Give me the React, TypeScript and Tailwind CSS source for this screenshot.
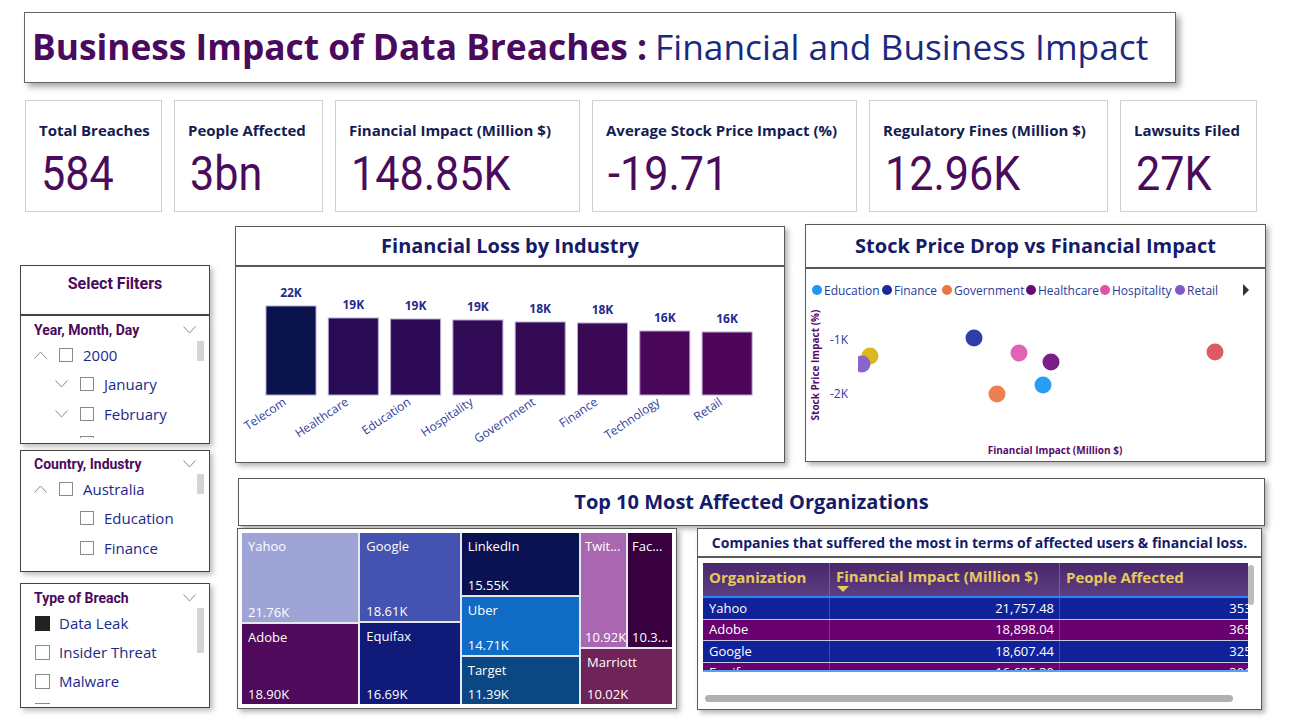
const kpis = [
  { label: 'Total Breaches', value: '584', w: 'w-[137px]' },
  { label: 'People Affected', value: '3bn', w: 'w-[149px]' },
  { label: 'Financial Impact (Million $)', value: '148.85K', w: 'w-[245px]' },
  { label: 'Average Stock Price Impact (%)', value: '-19.71', w: 'w-[265px]' },
  { label: 'Regulatory Fines (Million $)', value: '12.96K', w: 'w-[239px]' },
  { label: 'Lawsuits Filed', value: '27K', w: 'w-[137px]' },
];

const bars = [
  { n: 'Telecom', v: '22K', h: 89, c: '#0b134d' },
  { n: 'Healthcare', v: '19K', h: 77, c: '#290b55' },
  { n: 'Education', v: '19K', h: 76, c: '#2c0a56' },
  { n: 'Hospitality', v: '19K', h: 75, c: '#300a55' },
  { n: 'Government', v: '18K', h: 73, c: '#340a55' },
  { n: 'Finance', v: '18K', h: 72, c: '#3b0855' },
  { n: 'Technology', v: '16K', h: 64, c: '#4a0658' },
  { n: 'Retail', v: '16K', h: 63, c: '#4e0658' },
];

const legend = [
  { n: 'Education', c: '#2196f3', x: 11 },
  { n: 'Finance', c: '#1a2a9c', x: 81 },
  { n: 'Government', c: '#ec7540', x: 141 },
  { n: 'Healthcare', c: '#6a0a78', x: 225 },
  { n: 'Hospitality', c: '#e350a8', x: 299 },
  { n: 'Retail', c: '#8256cc', x: 374 },
];

const dots = [
  { x: 168, y: 69, c: '#2c3fa8' },
  { x: 213, y: 84, c: '#e064b4' },
  { x: 245, y: 93, c: '#7a1e88' },
  { x: 191, y: 125, c: '#ec8050' },
  { x: 237, y: 116, c: '#2a9cf4' },
  { x: 409, y: 83, c: '#e05a64' },
  { x: 64, y: 87, c: '#dcb81c' },
];

const rows = [
  { org: 'Yahoo', fin: '21,757.48', ppl: '353,004,523', bg: 'bg-[#10229a]' },
  { org: 'Adobe', fin: '18,898.04', ppl: '365,112,908', bg: 'bg-[#690070]' },
  { org: 'Google', fin: '18,607.44', ppl: '325,870,411', bg: 'bg-[#10229a]' },
  { org: 'Equifax', fin: '16,685.30', ppl: '301,245,880', bg: 'bg-[#690070]' },
];

const din = "font-['Roboto',sans-serif]";
const visual = 'border border-[#5a5a5a] bg-white shadow-[3px_3px_5px_rgba(0,0,0,0.3)]';

// thin power bi style chevron
function Chev({ up }: { up?: boolean }) {
  return (
    <svg width="13" height="8" viewBox="0 0 13 8" className="block">
      <polyline
        points={up ? '0.5,7.5 6.5,1 12.5,7.5' : '0.5,0.5 6.5,7 12.5,0.5'}
        fill="none"
        stroke="#8a8a8a"
        strokeWidth="1"
      />
    </svg>
  );
}

function Box() {
  return <div className="w-[14px] h-[14px] shrink-0 border bg-white border-[#8a8a8a]" />;
}

function Item({ label, level, chev }: { label: string; level: number; chev: 'up' | 'down' | 'none' }) {
  return (
    <div className={`flex items-center h-[29.5px] ${level === 0 ? 'pl-[13px]' : 'pl-[34px]'}`}>
      <div className="w-[13px] mr-[12px] flex items-center">
        {chev === 'up' && <Chev up />}
        {chev === 'down' && <Chev />}
      </div>
      <Box />
      <span className="ml-[10px] text-[15px] text-[#1a2a8a] whitespace-nowrap">{label}</span>
    </div>
  );
}

function SlicerHead({ title }: { title: string }) {
  return (
    <div className="flex items-center justify-between h-[20px] pl-[13px] pr-[13px]">
      <span className={`${din} text-[14px] font-bold text-[#4a0a5e]`}>{title}</span>
      <Chev />
    </div>
  );
}

function Treemap() {
  const cell = 'flex flex-col justify-between px-[6px] pt-[4px] pb-[1px] text-[13px] text-white leading-[18px] overflow-hidden whitespace-nowrap';
  return (
    <div className={`${visual} w-[440px] h-[181px] p-[4px]`}>
      <div className="flex gap-[2px] h-full bg-[#e6e6ee]">
        <div className="w-[117px] flex flex-col gap-[2px]">
          <div className={`${cell} h-[89px] bg-[#9ea4d6]`}><span>Yahoo</span><span>21.76K</span></div>
          <div className={`${cell} flex-1 bg-[#4f0a5b]`}><span>Adobe</span><span>18.90K</span></div>
        </div>
        <div className="w-[100px] flex flex-col gap-[2px]">
          <div className={`${cell} h-[88px] bg-[#4452b0]`}><span>Google</span><span>18.61K</span></div>
          <div className={`${cell} flex-1 bg-[#101a78]`}><span>Equifax</span><span>16.69K</span></div>
        </div>
        <div className="w-[118px] flex flex-col gap-[2px]">
          <div className={`${cell} h-[62px] bg-[#0b1252]`}><span>LinkedIn</span><span>15.55K</span></div>
          <div className={`${cell} h-[58px] bg-[#0f6bc4]`}><span>Uber</span><span>14.71K</span></div>
          <div className={`${cell} flex-1 bg-[#0b4783]`}><span>Target</span><span>11.39K</span></div>
        </div>
        <div className="flex-1 flex flex-col gap-[2px]">
          <div className="h-[114px] flex gap-[2px]">
            <div className={`${cell} w-[45px] bg-[#a867b0] !px-[4px]`}><span>Twit...</span><span>10.92K</span></div>
            <div className={`${cell} flex-1 bg-[#38003f] !px-[4px]`}><span>Fac...</span><span>10.3...</span></div>
          </div>
          <div className={`${cell} flex-1 bg-[#6f2358]`}><span>Marriott</span><span>10.02K</span></div>
        </div>
      </div>
    </div>
  );
}

function OrgTable() {
  return (
    <div className="w-[565px] h-[182px] flex flex-col">
      <div className={`${visual} h-[29px] flex items-center justify-center text-[14px] font-bold text-[#141c6a] whitespace-nowrap`}>
        Companies that suffered the most in terms of affected users &amp; financial loss.
      </div>
      <div className={`${visual} flex-1 relative px-[5px] pt-[5px]`}>
        <div className="w-[545px] h-[109px] overflow-hidden border-b-2 border-[#5aa0f0]">
          <div className="w-[611px]">
            <div className="flex h-[35px] bg-gradient-to-b from-[#48286a] to-[#5e3e82] border-b-2 border-[#2a86f0] text-[15px] font-bold text-[#e8c860]">
              <div className="w-[127px] pl-[6px] pt-[3px] border-r border-[#7a5a98]">Organization</div>
              <div className="w-[230px] pl-[6px] pt-[3px] border-r border-[#7a5a98] leading-[20px]">
                <div>Financial Impact (Million $)</div>
                <div className="ml-[1px] w-0 h-0 border-l-[6px] border-r-[6px] border-t-[6px] border-l-transparent border-r-transparent border-t-[#e8c860]" />
              </div>
              <div className="flex-1 pl-[6px] pt-[3px]">People Affected</div>
            </div>
            {rows.map(r => (
              <div key={r.org} className={`flex h-[21.5px] items-center text-[13px] text-white border-b border-[#c8c8e0] ${r.bg}`}>
                <div className="w-[127px] h-full flex items-center pl-[6px] border-r border-white/20">{r.org}</div>
                <div className="w-[230px] h-full flex items-center justify-end pr-[5px] border-r border-white/20">{r.fin}</div>
                <div className="flex-1 h-full flex items-center justify-end pr-[11px]">{r.ppl}</div>
              </div>
            ))}
          </div>
        </div>
        <div className="absolute right-[7px] top-[7px] w-[6px] h-[40px] rounded-full bg-[#bdbdbd]" />
        <div className="absolute left-[7px] bottom-[7px] w-[528px] h-[7px] rounded-full bg-[#b0b0b0]" />
      </div>
    </div>
  );
}

export default function App() {
  return (
    <div className="w-[1292px] h-[725px] bg-white overflow-hidden font-['Open_Sans',sans-serif]">
      {/* title */}
      <div className="pt-[12px] pl-[24px]">
        <div className="w-[1152px] h-[71px] border border-[#666] bg-white shadow-[4px_4px_6px_rgba(0,0,0,0.35)] flex items-center pl-[7px] pb-[4px] text-[35.3px] leading-[44px] whitespace-nowrap">
          <span className="font-bold text-[#4a0a5e]">Business Impact of Data Breaches :</span>
          <span className="ml-[8px] text-[#1a2a80]">Financial and Business Impact</span>
        </div>
      </div>

      {/* KPI cards */}
      <div className="mt-[17px] ml-[25px] flex gap-[12px]">
        {kpis.map(k => (
          <div key={k.label} className={`${k.w} h-[112px] border border-[#cfcfcf] pl-[13px] pt-[19px]`}>
            <div className="text-[15px] font-bold text-[#141c52] leading-[20px] whitespace-nowrap">{k.label}</div>
            <div className={`${din} mt-[10px] ml-[2px] text-[49px] leading-[48px] text-[#4b0b5c] whitespace-nowrap origin-left scale-x-[0.88]`}>{k.value}</div>
          </div>
        ))}
      </div>

      <div className="mt-[12px] flex items-start">
        {/* filters */}
        <div className="ml-[20px] mt-[41px] w-[190px] flex flex-col">
          <div className="h-[50px] border border-[#444] bg-white flex justify-center pt-[7px] shadow-[3px_3px_5px_rgba(0,0,0,0.25)]">
            <span className={`${din} text-[16px] font-bold text-[#4a0a5e] leading-[22px]`}>Select Filters</span>
          </div>
          <div className="relative h-[129px] border border-[#444] bg-white overflow-hidden pt-[4px] shadow-[3px_3px_5px_rgba(0,0,0,0.25)]">
            <SlicerHead title="Year, Month, Day" />
            <div className="h-[98px] overflow-hidden">
              <Item label="2000" level={0} chev="up" />
              <Item label="January" level={1} chev="down" />
              <Item label="February" level={1} chev="down" />
              <Item label="March" level={1} chev="down" />
            </div>
            <div className="absolute right-[5px] top-[25px] w-[7px] h-[20px] bg-[#d4d4d4]" />
          </div>
          <div className="relative mt-[6px] h-[122px] border border-[#444] bg-white overflow-hidden pt-[3px] shadow-[3px_3px_5px_rgba(0,0,0,0.25)]">
            <SlicerHead title="Country, Industry" />
            <div className="h-[95px] overflow-hidden">
              <Item label="Australia" level={0} chev="up" />
              <Item label="Education" level={1} chev="none" />
              <Item label="Finance" level={1} chev="none" />
              <Item label="Government" level={1} chev="none" />
            </div>
            <div className="absolute right-[5px] top-[23px] w-[7px] h-[20px] bg-[#d4d4d4]" />
          </div>
          <div className="relative mt-[11px] h-[125px] border border-[#444] bg-white overflow-hidden pt-[4px] shadow-[3px_3px_5px_rgba(0,0,0,0.25)]">
            <SlicerHead title="Type of Breach" />
            <div className="mt-[1px] h-[95px] overflow-hidden">
              {['Data Leak', 'Insider Threat', 'Malware', 'Phishing'].map((t, i) => (
                <div key={t} className="flex items-center h-[29px] pl-[14px]">
                  <div className={`w-[15px] h-[15px] border ${i === 0 ? 'bg-[#222] border-[#222]' : 'bg-white border-[#8a8a8a]'}`} />
                  <span className="ml-[9px] text-[15px] text-[#1a2a8a]">{t}</span>
                </div>
              ))}
            </div>
            <div className="absolute right-[5px] top-[24px] w-[7px] h-[45px] bg-[#d4d4d4]" />
          </div>
        </div>

        {/* main visuals */}
        <div className="ml-[25px] w-[1031px]">
          <div className="flex items-start">
            <div className="mt-[2px] w-[550px]">
              <div className={`${visual} h-[40px] flex items-center justify-center text-[20px] font-bold text-[#141c6a]`}>
                Financial Loss by Industry
              </div>
              <div className={`${visual} h-[197px]`}>
                <svg width="548" height="195" className="block">
                  {bars.map((b, i) => {
                    const x = 30 + i * 62.3;
                    const cx = x + 25;
                    const top = 128 - b.h;
                    return (
                      <g key={b.n}>
                        <rect x={x} y={top} width={50} height={b.h} fill={b.c} stroke="#b7a6d2" strokeWidth={1} />
                        <text x={cx} y={top - 9} textAnchor="middle" fontSize={12} fontWeight={700} fill="#1f2a8f" fontFamily="Open Sans, sans-serif">{b.v}</text>
                        <text x={cx - 4} y={137} textAnchor="end" fontSize={12} fill="#2a3a9c" fontFamily="Open Sans, sans-serif" transform={`rotate(-34 ${cx - 4} 137)`}>{b.n}</text>
                      </g>
                    );
                  })}
                </svg>
              </div>
            </div>
            <div className="ml-[20px] w-[461px]">
              <div className={`${visual} h-[44px] flex items-center justify-center text-[20px] font-bold text-[#141c6a]`}>
                Stock Price Drop vs Financial Impact
              </div>
              <div className={`${visual} h-[194px]`}>
                <svg width="459" height="192" className="block">
                  <defs>
                    <clipPath id="plot">
                      <rect x="52" y="40" width="400" height="130" />
                    </clipPath>
                  </defs>
                  {legend.map(l => (
                    <g key={l.n}>
                      <circle cx={l.x} cy={21} r={5} fill={l.c} />
                      <text x={l.x + 7} y={25.5} fontSize={12} fill="#2a3a9c" fontFamily="Open Sans, sans-serif">{l.n}</text>
                    </g>
                  ))}
                  <path d="M437 15 L443 21 L437 27 Z" fill="#333" />
                  <text x={42} y={75} textAnchor="end" fontSize={12} fill="#2a3a9c" fontFamily="Open Sans, sans-serif">-1K</text>
                  <text x={42} y={129} textAnchor="end" fontSize={12} fill="#2a3a9c" fontFamily="Open Sans, sans-serif">-2K</text>
                  <text x={0} y={0} textAnchor="middle" fontSize={10} fontWeight={700} fill="#5a0a6a" fontFamily="Open Sans, sans-serif" transform="translate(13 96) rotate(-90)">Stock Price Impact (%)</text>
                  <text x={249} y={185} textAnchor="middle" fontSize={10} fontWeight={700} fill="#5a0a6a" fontFamily="Open Sans, sans-serif">Financial Impact (Million $)</text>
                  <g clipPath="url(#plot)">
                    {dots.map(d => (
                      <circle key={d.c} cx={d.x} cy={d.y} r={8.5} fill={d.c} />
                    ))}
                    <circle cx={56} cy={95} r={8.5} fill="#8a66cc" />
                  </g>
                </svg>
              </div>
            </div>
          </div>

          <div className={`${visual} mt-[15px] ml-[3px] w-[1027px] h-[48px] flex items-center justify-center text-[20px] font-bold text-[#141c6a]`}>
            Top 10 Most Affected Organizations
          </div>

          <div className="mt-[2px] flex items-start">
            <div className="ml-[2px]">
              <Treemap />
            </div>
            <div className="ml-[20px]">
              <OrgTable />
            </div>
          </div>
        </div>
      </div>
    </div>
  );
}
